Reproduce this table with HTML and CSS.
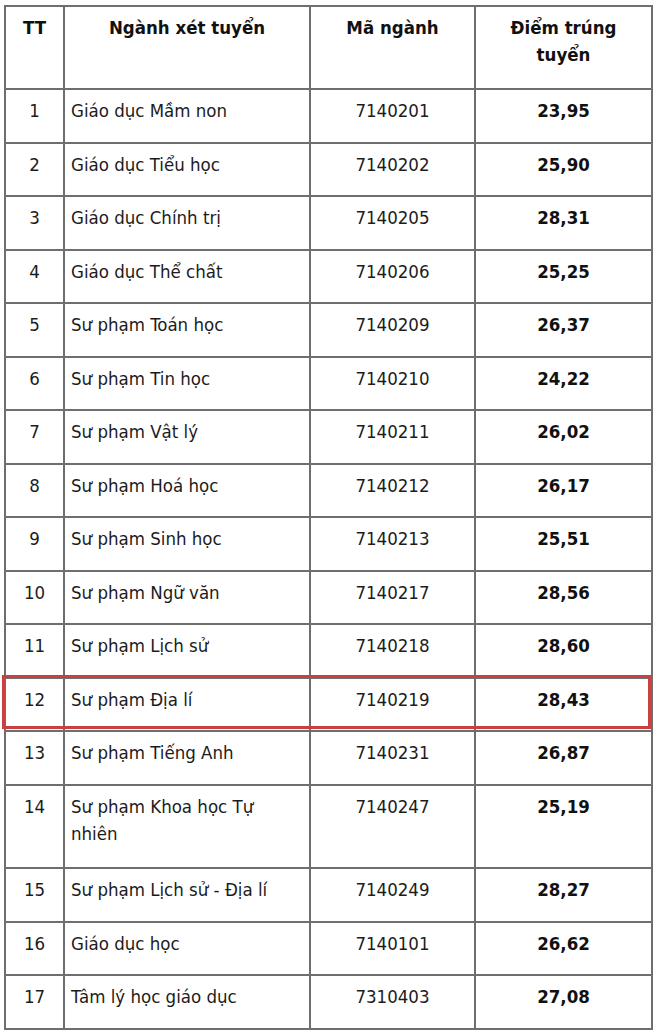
FILE: index.html
```html
<!DOCTYPE html>
<html lang="vi">
<head>
<meta charset="utf-8">
<link rel="stylesheet" href="styles.css">
</head>
<body>
<div class="wrap">
<table class="scores">
<colgroup>
<col class="c-tt"><col class="c-name"><col class="c-code"><col class="c-score">
</colgroup>
<thead>
<tr class="head">
<th>TT</th><th>Ngành xét tuyển</th><th>Mã ngành</th><th>Điểm trúng tuyển</th>
</tr>
</thead>
<tbody>
<tr><td class="tt">1</td><td class="name">Giáo dục Mầm non</td><td class="code">7140201</td><td class="score">23,95</td></tr>
<tr><td class="tt">2</td><td class="name">Giáo dục Tiểu học</td><td class="code">7140202</td><td class="score">25,90</td></tr>
<tr><td class="tt">3</td><td class="name">Giáo dục Chính trị</td><td class="code">7140205</td><td class="score">28,31</td></tr>
<tr><td class="tt">4</td><td class="name">Giáo dục Thể chất</td><td class="code">7140206</td><td class="score">25,25</td></tr>
<tr><td class="tt">5</td><td class="name">Sư phạm Toán học</td><td class="code">7140209</td><td class="score">26,37</td></tr>
<tr><td class="tt">6</td><td class="name">Sư phạm Tin học</td><td class="code">7140210</td><td class="score">24,22</td></tr>
<tr><td class="tt">7</td><td class="name">Sư phạm Vật lý</td><td class="code">7140211</td><td class="score">26,02</td></tr>
<tr><td class="tt">8</td><td class="name">Sư phạm Hoá học</td><td class="code">7140212</td><td class="score">26,17</td></tr>
<tr><td class="tt">9</td><td class="name">Sư phạm Sinh học</td><td class="code">7140213</td><td class="score">25,51</td></tr>
<tr><td class="tt">10</td><td class="name">Sư phạm Ngữ văn</td><td class="code">7140217</td><td class="score">28,56</td></tr>
<tr><td class="tt">11</td><td class="name">Sư phạm Lịch sử</td><td class="code">7140218</td><td class="score">28,60</td></tr>
<tr class="hl"><td class="tt">12</td><td class="name">Sư phạm Địa lí</td><td class="code">7140219</td><td class="score">28,43</td></tr>
<tr><td class="tt">13</td><td class="name">Sư phạm Tiếng Anh</td><td class="code">7140231</td><td class="score">26,87</td></tr>
<tr class="tall"><td class="tt">14</td><td class="name">Sư phạm Khoa học Tự nhiên</td><td class="code">7140247</td><td class="score">25,19</td></tr>
<tr><td class="tt">15</td><td class="name">Sư phạm Lịch sử - Địa lí</td><td class="code">7140249</td><td class="score">28,27</td></tr>
<tr><td class="tt">16</td><td class="name">Giáo dục học</td><td class="code">7140101</td><td class="score">26,62</td></tr>
<tr><td class="tt">17</td><td class="name">Tâm lý học giáo dục</td><td class="code">7310403</td><td class="score">27,08</td></tr>
</tbody>
</table>
<div class="highlight"></div>
</div>
</body>
</html>
```

FILE: styles.css
```css
html, body {
  margin: 0;
  padding: 0;
  background: #ffffff;
}
body {
  font-family: "DejaVu Sans Condensed", "DejaVu Sans", sans-serif;
  font-size: 18.5px;
  color: #1c1c1c;
}
.wrap {
  position: relative;
  padding: 5px 0 0 4px;
}
.scores {
  border-collapse: collapse;
  table-layout: fixed;
  width: 647px;
}
.c-tt { width: 59px; }
.c-name { width: 246px; }
.c-code { width: 165px; }
.c-score { width: 177px; }
.scores th, .scores td {
  border: 2px solid #6e6e6e;
  vertical-align: top;
  padding: 7px 6px 0 6px;
  line-height: 27px;
  text-align: center;
}
.scores th {
  font-weight: bold;
  color: #111;
  padding-left: 28px;
  padding-right: 28px;
}
.scores th:first-child { padding-left: 6px; padding-right: 6px; }
.head { height: 83px; }
.scores tbody tr { height: 53.5px; }
.scores tbody tr.tall { height: 83.5px; }
.scores td.name { text-align: left; }
.scores td.score { font-weight: bold; color: #111; }
.highlight {
  position: absolute;
  left: 2px;
  top: 675px;
  width: 643px;
  height: 48px;
  border: 3px solid #c8403f;
}
```
